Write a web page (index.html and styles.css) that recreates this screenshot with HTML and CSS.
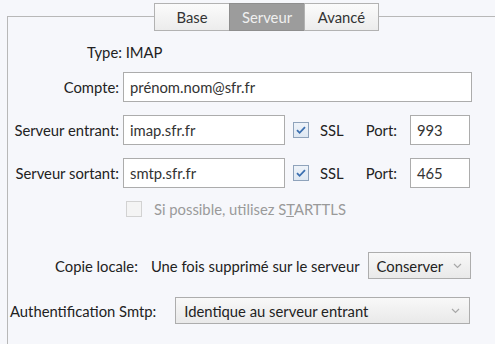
FILE: index.html
```html
<!DOCTYPE html>
<html lang="fr">
<head>
<meta charset="utf-8">
<link rel="stylesheet" href="styles.css">
</head>
<body>
<div class="tabs">
  <div class="tab">Base</div>
  <div class="tab active">Serveur</div>
  <div class="tab">Avancé</div>
</div>
<div class="frame">
  <div class="type">Type: IMAP</div>
  <div class="grid">
    <label class="lbl">Compte:</label>
    <div class="input wide">prénom.nom@sfr.fr</div>

    <label class="lbl">Serveur entrant:</label>
    <div class="srow">
      <div class="input host">imap.sfr.fr</div>
      <span class="cb checked"><svg width="16" height="16" viewBox="0 0 16 16"><path d="M4 8.2 L6.6 10.8 L12 5.2" fill="none" stroke="#3b6fb0" stroke-width="1.8"/></svg></span>
      <span class="ssl">SSL</span>
      <span class="port">Port:</span>
      <div class="input portin">993</div>
    </div>

    <label class="lbl">Serveur sortant:</label>
    <div class="srow">
      <div class="input host">smtp.sfr.fr</div>
      <span class="cb checked"><svg width="16" height="16" viewBox="0 0 16 16"><path d="M4 8.2 L6.6 10.8 L12 5.2" fill="none" stroke="#3b6fb0" stroke-width="1.8"/></svg></span>
      <span class="ssl">SSL</span>
      <span class="port">Port:</span>
      <div class="input portin">465</div>
    </div>

    <span></span>
    <div class="tls">
      <span class="cb disabled"></span>
      <span class="tlstext">Si possible, utilisez S<u>T</u>ARTTLS</span>
    </div>
  </div>

  <div class="copie">
    <span class="clbl">Copie locale:</span>
    <span class="ctext">Une fois supprimé sur le serveur</span>
    <div class="select small">Conserver<svg class="arrow" width="9" height="6" viewBox="0 0 9 6"><path d="M1 1 L4.5 4.5 L8 1" fill="none" stroke="#a8a8a8" stroke-width="1.2"/></svg></div>
  </div>

  <div class="auth">
    <span class="albl">Authentification Smtp:</span>
    <div class="select big">Identique au serveur entrant<svg class="arrow" width="9" height="6" viewBox="0 0 9 6"><path d="M1 1 L4.5 4.5 L8 1" fill="none" stroke="#a8a8a8" stroke-width="1.2"/></svg></div>
  </div>
</div>
</body>
</html>
```
FILE: styles.css
```css
* { box-sizing: border-box; }
html, body { margin: 0; padding: 0; }
body {
  width: 495px;
  height: 344px;
  overflow: hidden;
  background: #f6f7fb;
  font-family: Lato, "Open Sans", sans-serif;
  font-size: 14.8px;
  color: #222;
}
.tabs {
  display: flex;
  margin: 3px 0 0 154px;
  position: relative;
  z-index: 1;
  height: 28px;
}
.tab {
  height: 28px;
  width: 75px;
  border: 1px solid #b2b2b2;
  border-right: none;
  background: linear-gradient(#fbfbfb, #ececec);
  color: #333;
  display: flex;
  align-items: center;
  justify-content: center;
  padding-bottom: 1px;
}
.tab:last-child { border-right: 1px solid #b2b2b2; }
.tab.active {
  background: #9c9c9c;
  color: #f0f0f0;
  border-color: #8e8e8e;
}
.frame {
  margin: -15px 0 0 7px;
  height: 328px;
  border: 1px solid #b8b8b8;
  border-right: none;
  border-bottom: none;
  padding-top: 27px;
}
.type {
  padding-left: 79px;
  height: 17px;
  line-height: 17px;
}
.grid {
  display: grid;
  grid-template-columns: 111px 1fr;
  column-gap: 4px;
  row-gap: 13px;
  align-items: center;
  margin-top: 11px;
}
.lbl { text-align: right; }
.input {
  height: 30px;
  border: 1px solid #acacac;
  background: #fff;
  color: #333;
  padding: 0 6px;
  display: flex;
  align-items: center;
}
.wide { width: 349px; }
.srow {
  display: flex;
  align-items: center;
}
.host { width: 162px; }
.cb {
  width: 16px;
  height: 16px;
  border: 1px solid #8fa3bb;
  background: linear-gradient(#eef3f9, #dfe8f2);
  display: inline-flex;
  margin-left: 8px;
}
.cb svg { margin: -1px; }
.ssl { margin-left: 11px; }
.port { margin-left: 22px; }
.portin { width: 60px; margin-left: 13px; }
.tls {
  display: flex;
  align-items: center;
  margin-top: -1px;
}
.cb.disabled {
  margin-left: 3px;
  border-color: #d2d2d2;
  background: #f4f4f4;
}
.tlstext { color: #9a9a9a; margin-left: 12px; }
.copie {
  display: flex;
  align-items: center;
  margin-top: 34px;
  padding-left: 47px;
}
.ctext { margin-left: 13px; }
.select {
  height: 27px;
  border: 1px solid #adadad;
  background: linear-gradient(#f8f8f8, #e9e9e9);
  display: flex;
  align-items: center;
  justify-content: space-between;
  padding: 0 8px 0 8px;
  color: #222;
}
.select.small { width: 103px; margin-left: 8px; }
.select.big { width: 295px; margin-left: 19px; padding-left: 8px; padding-right: 9px; }
.auth {
  display: flex;
  align-items: center;
  margin-top: 18px;
  padding-left: 2px;
}
```
